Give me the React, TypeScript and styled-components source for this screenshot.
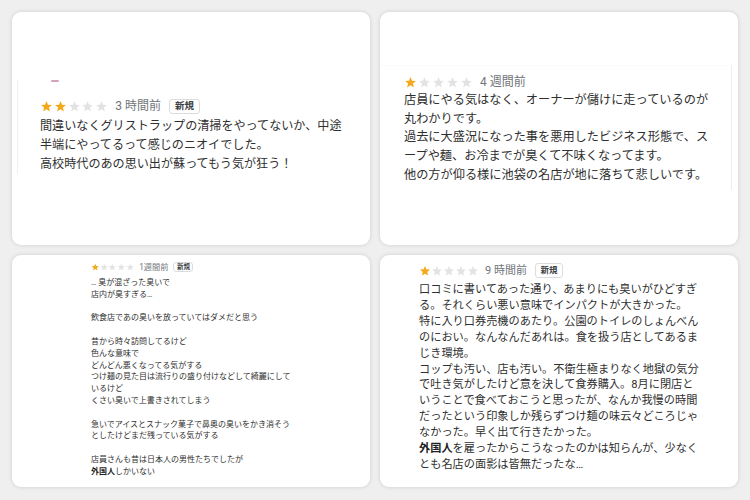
import React from "react";
import styled, { createGlobalStyle } from "styled-components";

const GlobalStyle = createGlobalStyle`
  html, body { margin: 0; padding: 0; background: #efefef; }
  body { font-family: Roboto, "Noto Sans CJK JP", sans-serif; color: #2b2b2b; }
`;

const Page = styled.div`
  display: grid;
  grid-template-columns: 358px 358px;
  grid-template-rows: 233px 232px;
  column-gap: 10px;
  row-gap: 10px;
  padding: 12px;
  width: 750px;
  height: 500px;
  box-sizing: border-box;
`;

const Card = styled.div<{ $pad: string }>`
  background: #ffffff;
  border-radius: 9px;
  box-shadow: 0 0 4px rgba(0, 0, 0, 0.14);
  overflow: hidden;
  display: flex;
  flex-direction: column;
  padding: ${(p) => p.$pad};
  box-sizing: border-box;
`;

const Frame = styled.div<{ $side: "left" | "right" }>`
  display: flex;
  flex-direction: column;
  ${(p) =>
    p.$side === "left"
      ? `border-left: 1px solid #f0f0f0; padding: 0 0 0 22px;`
      : `border-top: 1px solid #fafafa; border-right: 1px solid #ededed; padding: 8px 0 5px 24px;`}
`;

const Plain = styled.div`
  display: flex;
  flex-direction: column;
`;

const AvatarStub = styled.div`
  margin-left: 11px;
  width: 8px;
  height: 2px;
  border-radius: 1px;
  background: #d1a6bd;
`;

type Scale = {
  star: number;
  starGap: number;
  headerH: number;
  headerTop: number;
  timeSize: number;
  timeGap: number;
  badgeW: number;
  badgeH: number;
  badgeFont: number;
  textTop: number;
  font: number;
  lh: number;
};

const Header = styled.div<{ $h: number; $top: number }>`
  display: flex;
  align-items: center;
  height: ${(p) => p.$h}px;
  margin-top: ${(p) => p.$top}px;
`;

const StarRow = styled.div<{ $gap: number }>`
  display: flex;
  gap: ${(p) => p.$gap}px;
`;

const Time = styled.span<{ $size: number; $gap: number }>`
  font-size: ${(p) => p.$size}px;
  color: #70757a;
  margin-left: ${(p) => p.$gap}px;
  white-space: nowrap;
  line-height: 1;
`;

const Badge = styled.span<{ $w: number; $h: number; $f: number }>`
  display: inline-flex;
  align-items: center;
  justify-content: center;
  width: ${(p) => p.$w}px;
  height: ${(p) => p.$h}px;
  box-sizing: border-box;
  border: 1px solid #dadce0;
  border-radius: 3px;
  font-size: ${(p) => p.$f}px;
  font-weight: 700;
  color: #3c4043;
  margin-left: ${(p) => Math.round(p.$h / 2)}px;
  line-height: 1;
`;

const Body = styled.div<{ $top: number; $font: number; $lh: number }>`
  margin-top: ${(p) => p.$top}px;
  font-size: ${(p) => p.$font}px;
  line-height: ${(p) => p.$lh}px;
  color: #2f2f2f;
`;

const Line = styled.div`
  white-space: nowrap;
  min-height: 1em;
`;

const Strong = styled.b`
  font-weight: 700;
  color: #1f1f1f;
`;

const Star: React.FC<{ size: number; filled: boolean }> = ({ size, filled }) => (
  <svg width={size} height={size} viewBox="0 0 24 24">
    <path
      d="M12 17.27L18.18 21l-1.64-7.03L22 9.24l-7.19-.61L12 2 9.19 8.63 2 9.24l5.46 4.73L5.82 21z"
      fill={filled ? "#f4a91d" : "#e3e3e3"}
    />
  </svg>
);

const Review: React.FC<{ s: Scale; rating: number; time: string; isNew?: boolean; lines: React.ReactNode[] }> = ({
  s,
  rating,
  time,
  isNew,
  lines,
}) => (
  <>
    <Header $h={s.headerH} $top={s.headerTop}>
      <StarRow $gap={s.starGap}>
        {[0, 1, 2, 3, 4].map((i) => (
          <Star key={i} size={s.star} filled={i < rating} />
        ))}
      </StarRow>
      <Time $size={s.timeSize} $gap={s.timeGap}>
        {time}
      </Time>
      {isNew && (
        <Badge $w={s.badgeW} $h={s.badgeH} $f={s.badgeFont}>
          新規
        </Badge>
      )}
    </Header>
    <Body $top={s.textTop} $font={s.font} $lh={s.lh}>
      {lines.map((l, i) => (
        <Line key={i}>{l === "" ? "\u00a0" : l}</Line>
      ))}
    </Body>
  </>
);

const s1: Scale = {
  star: 13, starGap: 0.8, headerH: 16, headerTop: 16, timeSize: 12, timeGap: 7,
  badgeW: 31, badgeH: 15, badgeFont: 9.5, textTop: 3, font: 12.1, lh: 19,
};
const s2: Scale = {
  star: 13, starGap: 1, headerH: 16, headerTop: 0, timeSize: 12, timeGap: 7,
  badgeW: 31, badgeH: 15, badgeFont: 9.5, textTop: 1, font: 12.2, lh: 18.7,
};
const s3: Scale = {
  star: 8.5, starGap: 0.2, headerH: 10, headerTop: 0, timeSize: 8.2, timeGap: 5,
  badgeW: 20, badgeH: 10, badgeFont: 6.5, textTop: 5, font: 8, lh: 11.8,
};
const s4: Scale = {
  star: 12, starGap: -0.4, headerH: 15, headerTop: 0, timeSize: 11, timeGap: 6,
  badgeW: 28, badgeH: 15, badgeFont: 8.5, textTop: 4, font: 11.2, lh: 15.9,
};

export default function App() {
  return (
    <>
      <GlobalStyle />
      <Page>
        <Card $pad="68px 0 0 5px">
          <Frame $side="left">
            <AvatarStub />
            <Review
              s={s1}
              rating={2}
              time="3 時間前"
              isNew
              lines={[
                "間違いなくグリストラップの清掃をやってないか、中途",
                "半端にやってるって感じのニオイでした。",
                "高校時代のあの思い出が蘇ってもう気が狂う！",
              ]}
            />
          </Frame>
        </Card>
        <Card $pad="53px 6px 0 0">
          <Frame $side="right">
            <Review
              s={s2}
              rating={1}
              time="4 週間前"
              lines={[
                "店員にやる気はなく、オーナーが儲けに走っているのが",
                "丸わかりです。",
                "過去に大盛況になった事を悪用したビジネス形態で、ス",
                "ープや麺、お冷までが臭くて不味くなってます。",
                "他の方が仰る様に池袋の名店が地に落ちて悲しいです。",
              ]}
            />
          </Frame>
        </Card>
        <Card $pad="7px 0 0 79px">
          <Plain>
            <Review
              s={s3}
              rating={1}
              time="1週間前"
              isNew
              lines={[
                "… 臭が混ざった臭いで",
                "店内が臭すぎる…",
                "",
                "飲食店であの臭いを放っていてはダメだと思う",
                "",
                "昔から時々訪問してるけど",
                "色んな意味で",
                "どんどん悪くなってる気がする",
                "つけ麺の見た目は流行りの盛り付けなどして綺麗にして",
                "いるけど",
                "くさい臭いで上書きされてしまう",
                "",
                "急いでアイスとスナック菓子で鼻奥の臭いをかき消そう",
                "としたけどまだ残っている気がする",
                "",
                "店員さんも昔は日本人の男性たちでしたが",
                <>
                  <Strong>外国人</Strong>しかいない
                </>,
              ]}
            />
          </Plain>
        </Card>
        <Card $pad="8px 0 0 39px">
          <Plain>
            <Review
              s={s4}
              rating={1}
              time="9 時間前"
              isNew
              lines={[
                "口コミに書いてあった通り、あまりにも臭いがひどすぎ",
                "る。それくらい悪い意味でインパクトが大きかった。",
                "特に入り口券売機のあたり。公園のトイレのしょんべん",
                "のにおい。なんなんだあれは。食を扱う店としてあるま",
                "じき環境。",
                "コップも汚い、店も汚い。不衛生極まりなく地獄の気分",
                "で吐き気がしたけど意を決して食券購入。8月に閉店と",
                "いうことで食べておこうと思ったが、なんか我慢の時間",
                "だったという印象しか残らずつけ麺の味云々どころじゃ",
                "なかった。早く出て行きたかった。",
                <>
                  <Strong>外国人</Strong>を雇ったからこうなったのかは知らんが、少なく
                </>,
                "とも名店の面影は皆無だったな…",
              ]}
            />
          </Plain>
        </Card>
      </Page>
    </>
  );
}
